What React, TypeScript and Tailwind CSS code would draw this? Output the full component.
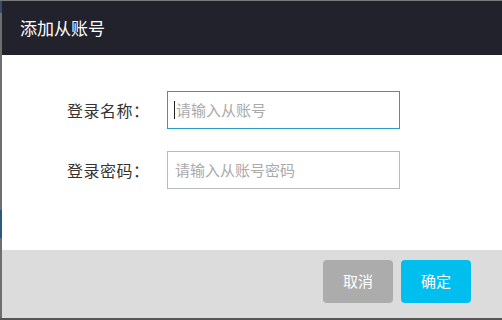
import React from "react";

export default function App() {
  const font = { fontFamily: '"Microsoft YaHei", "Noto Sans CJK SC", sans-serif' };
  return (
    <div className="w-[502px] h-[320px] bg-[#6b6b6b] flex flex-col overflow-hidden" style={font}>
      <div className="h-[1px] bg-[#7a7a7a]" />
      <div className="flex flex-1">
        <div className="w-[2px] flex flex-col">
          <div className="h-[12px] bg-[#3a4a6a]" />
          <div className="flex-1 bg-[#6e6e6e]" />
          <div className="h-[28px] bg-[#2a5a80]" />
          <div className="h-[80px] bg-[#6e6e6e]" />
        </div>
        <div className="flex-1 flex flex-col">
          <div className="h-[54px] bg-[#22222c] flex items-center pl-[18px]">
            <span className="text-[17px] text-white">添加从账号</span>
          </div>
          <div className="h-[195px] bg-white flex flex-col pt-[36px] gap-[22px]">
            <div className="flex items-center">
              <span className="w-[165px] pl-[65px] text-[16px] text-[#333] tracking-[0.5px]">登录名称：</span>
              <div className="w-[233px] h-[38px] border border-[#2a9cc8] flex items-center pl-[6px]">
                <span className="w-[1px] h-[18px] bg-[#222] mr-[1px]" />
                <span className="text-[15px] text-[#aaa]">请输入从账号</span>
              </div>
            </div>
            <div className="flex items-center">
              <span className="w-[165px] pl-[65px] text-[16px] text-[#333] tracking-[0.5px]">登录密码：</span>
              <div className="w-[233px] h-[38px] border border-[#bbb] flex items-center pl-[7px]">
                <span className="text-[15px] text-[#aaa]">请输入从账号密码</span>
              </div>
            </div>
          </div>
          <div className="flex-1 bg-[#dcdcdc] flex justify-end items-start pt-[10px] pr-[31px] gap-[8px]">
            <button className="w-[70px] h-[43px] rounded-[4px] bg-[#acacac] text-white text-[15px]">取消</button>
            <button className="w-[70px] h-[43px] rounded-[4px] bg-[#00bfef] text-white text-[15px]">确定</button>
          </div>
        </div>
      </div>
      <div className="h-[2px] bg-[#555]" />
    </div>
  );
}
